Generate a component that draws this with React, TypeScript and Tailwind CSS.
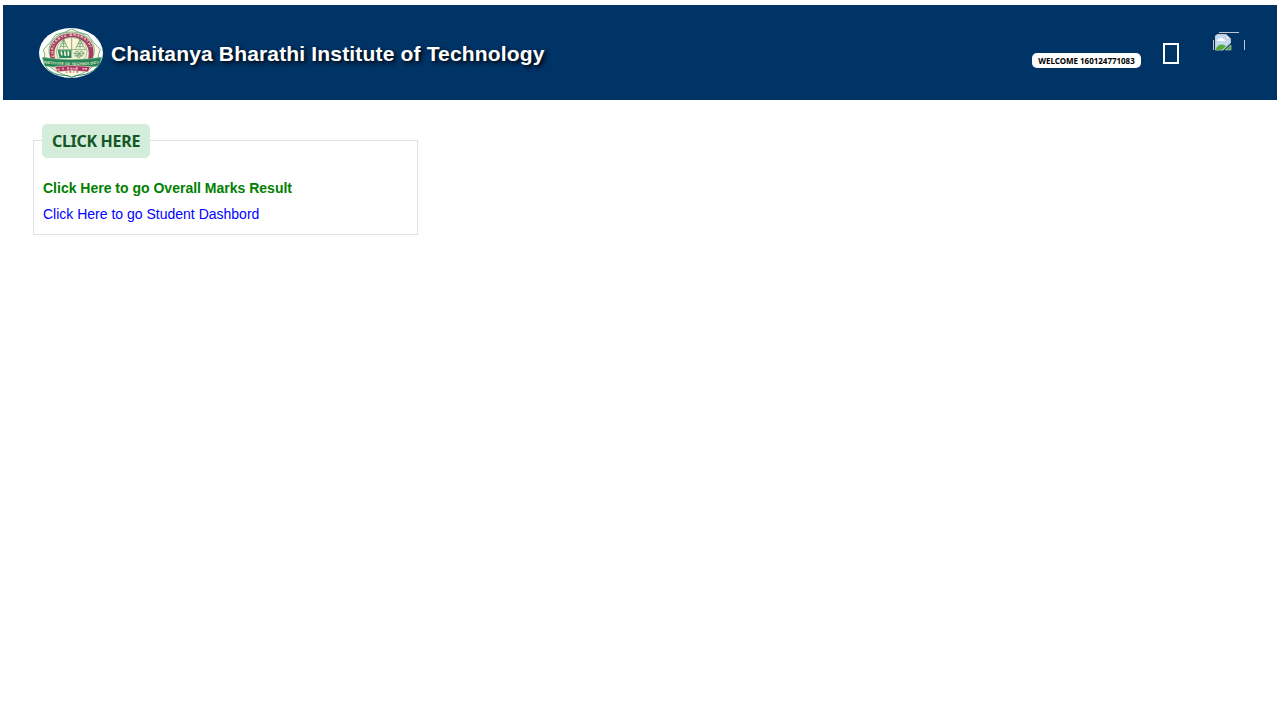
function Logo() {
  return (
    <svg className="h-[50px] w-16 shrink-0" viewBox="0 0 192 150" aria-label="College crest">
      <defs>
        <path id="ring" d="M41 88C25 45 60 18 98 18S171 45 155 88" />
        <path id="banner" d="M14 106Q98 117 184 106" />
        <path id="motto" d="M52 129Q98 121 148 129" />
        <clipPath id="oval"><ellipse cx="96" cy="75" rx="96" ry="75" /></clipPath>
      </defs>
      <g clipPath="url(#oval)">
        <rect width="192" height="150" fill="#fff" />
        <path d="M98 3Q120 15 146 20Q163 45 184 65Q176 78 178 96Q160 130 98 148Q38 132 16 96Q20 78 13 65Q35 44 50 20Q78 15 98 3Z" fill="#fff8df" stroke="#5aa17e" strokeWidth="2.5" />
        <ellipse cx="98" cy="68" rx="68" ry="56" fill="#fcf0cb" stroke="#408e68" strokeWidth="2" />
        <path d="M36 94C22 52 50 16 98 16S174 52 160 94L147 94C157 57 136 29 98 29S39 57 49 94Z" fill="#a23d65" />
        <ellipse cx="98" cy="70" rx="46" ry="42" fill="#fcf4d5" stroke="#78a776" strokeWidth="2" />
        <g fill="none" stroke="#59986d" strokeWidth="2.2">
          <path d="M61 62L74 34L87 62M65 55H83M68 47H80M72 40H77M74 34V62M110 62L123 34L137 62M114 55H133M117 47H130M123 34V62M98 29V90M55 65H141M103 76H137M105 84H132" />
          <circle cx="114" cy="76" r="6" /><circle cx="128" cy="76" r="6" /><circle cx="119" cy="84" r="5" />
        </g>
        <path d="M56 67H96V90H62Z" fill="#27865b" />
        <path d="M66 70L69 82M77 70L79 84M88 70V83" stroke="#fff6dd" strokeWidth="5" />
        <path d="M10 88Q98 101 188 88L181 114Q98 126 17 114Z" fill="#278459" stroke="#8abb95" strokeWidth="2" />
        <path d="M48 116Q98 109 154 116L147 132Q98 123 53 132Z" fill="#a72d60" stroke="#eed9bd" strokeWidth="2" />
        <path d="M20 117Q42 143 78 142Q88 142 98 148Q110 141 127 141Q153 139 175 117" fill="none" stroke="#328d61" strokeWidth="3" />
        <g fontFamily="Liberation Sans, sans-serif" fontWeight="700">
          <text fill="#ffe9d5" fontSize="11" dy="6"><textPath href="#ring" textLength="184">CHAITANYA BHARATHI</textPath></text>
          <text fill="#e8efc8" fontSize="11"><textPath href="#banner" textLength="166">INSTITUTE OF TECHNOLOGY</textPath></text>
          <text fill="#fbd8c9" fontSize="10"><textPath href="#motto" textLength="92">स्वयं तेजस्वी भव</textPath></text>
          <text x="80" y="136" fill="#963d58" fontSize="10" textLength="37">1979</text>
        </g>
      </g>
    </svg>
  );
}

function BrokenImage() {
  return (
    <svg className="ml-[33px] mt-[27px] h-8 w-[34px] shrink-0" viewBox="0 0 34 32" aria-label="Profile">
      <path d="M7 .5H27M1.5 8V18M32.5 8V18" fill="none" stroke="#bfc5ca" />
      <path d="M3.5 4L5 2.5H14L18.5 7V11L11 18H3.5Z" fill="#c5d8f2" stroke="#c8c8c8" />
      <path d="M14 2.5V7H18.5Z" fill="#fff" stroke="#a4aaaf" strokeWidth=".6" />
      <path d="M5 9Q5 7 7 7Q9 4 11 7Q13 7 13 9Z" fill="#fff" />
      <path d="M4 17Q5 13 9 12.5Q12 12 14 14L10 18H4Z" fill="#54ad35" />
      <path d="M13 18L19 13V18Z" fill="#54ad35" stroke="#c8d0d0" strokeWidth=".6" />
    </svg>
  );
}

export default function App() {
  return (
    <div className="min-h-screen bg-white px-[3px] pt-[5px] font-['Liberation_Sans',sans-serif]">
      <header className="flex h-[95px] bg-[#003366]">
        <div className="ml-9 mt-[23px] flex h-[50px] items-center">
          <Logo />
          <h1 className="ml-[8px] whitespace-nowrap pt-[2px] text-[21px] font-bold leading-[50px] tracking-[0.165px] text-white [text-shadow:2px_2px_4px_#000]">
            Chaitanya Bharathi Institute of Technology
          </h1>
        </div>
        <div className="ml-auto mr-[31px] flex items-start">
          <div className="mt-12 flex h-[15px] w-[109px] items-center justify-center whitespace-nowrap rounded-[5px] bg-white font-['Noto_Sans',sans-serif] text-[8px] font-bold tracking-[-0.02px] text-black">
            WELCOME 160124771083
          </div>
          <div className="ml-[22px] mt-[38px] h-[21px] w-4 border-2 border-white" />
          <BrokenImage />
        </div>
      </header>
      <main className="pl-[30px] pt-10">
        <section className="flex h-[95px] w-[385px] flex-col items-start border border-[#dee2e6] px-[9px]">
          <h2 className="-ml-px -mt-[17px] flex h-[34px] w-[108px] shrink-0 items-center justify-center whitespace-nowrap rounded-[5px] bg-[#d4edda] font-['Noto_Sans',sans-serif] text-[16px] font-bold tracking-[-0.3px] text-[#155724]">
            CLICK HERE
          </h2>
          <div className="flex flex-col items-start pt-[17px] text-[14px] leading-[26px]">
            <a className="font-bold text-[#008000]">Click Here to go Overall Marks Result</a>
            <a className="text-[#0000ff]">Click Here to go Student Dashbord</a>
          </div>
        </section>
      </main>
    </div>
  );
}
